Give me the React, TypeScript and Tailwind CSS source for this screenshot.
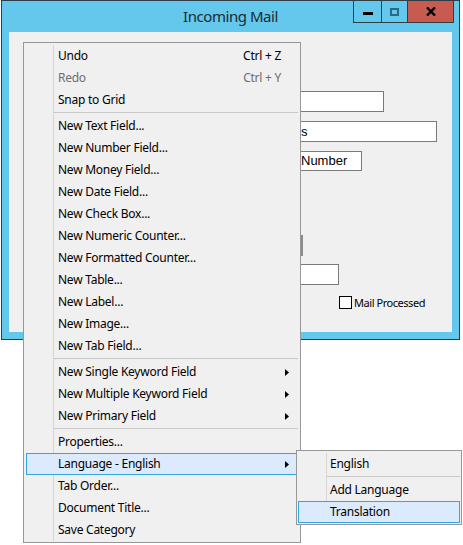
import clsx from "clsx";

type Entry =
  | { sep: true }
  | { sep?: false; label: string; shortcut?: string; disabled?: boolean; arrow?: boolean; active?: boolean };

const mainItems: Entry[] = [
  { label: "Undo", shortcut: "Ctrl + Z" },
  { label: "Redo", shortcut: "Ctrl + Y", disabled: true },
  { label: "Snap to Grid" },
  { sep: true },
  { label: "New Text Field..." },
  { label: "New Number Field..." },
  { label: "New Money Field..." },
  { label: "New Date Field..." },
  { label: "New Check Box..." },
  { label: "New Numeric Counter..." },
  { label: "New Formatted Counter..." },
  { label: "New Table..." },
  { label: "New Label..." },
  { label: "New Image..." },
  { label: "New Tab Field..." },
  { sep: true },
  { label: "New Single Keyword Field", arrow: true },
  { label: "New Multiple Keyword Field", arrow: true },
  { label: "New Primary Field", arrow: true },
  { sep: true },
  { label: "Properties..." },
  { label: "Language - English", arrow: true, active: true },
  { label: "Tab Order..." },
  { label: "Document Title..." },
  { label: "Save Category" },
];

const subItems: Entry[] = [
  { label: "English" },
  { sep: true },
  { label: "Add Language" },
  { label: "Translation", active: true },
];

function Arrow() {
  return (
    <svg width="4" height="7" viewBox="0 0 4 7" className="shrink-0">
      <path d="M0 0 L4 3.5 L0 7 Z" fill="#000" />
    </svg>
  );
}

function MenuList({ items, gutter }: { items: Entry[]; gutter: "main" | "sub" }) {
  const gutterW = gutter === "main" ? "w-[28px]" : "w-[29px]";
  const gutterActiveW = gutter === "main" ? "w-[27px]" : "w-[28px]";
  const textPad = gutter === "main" ? "pl-[4px]" : "pl-[3px]";
  return (
    <>
      {items.map((it, i) =>
        it.sep ? (
          <div key={i} className="flex h-[4px]">
            <div className={clsx("h-full shrink-0 border-r border-[#d5d5d5]", gutterW)} />
            <div className="mt-[1px] h-px flex-1 bg-[#c8c8c8]" />
          </div>
        ) : (
          <div
            key={i}
            className={clsx(
              "flex h-[22px] items-center",
              it.active && "border border-[#33a6e0] bg-[#dbeafc]"
            )}
          >
            <div
              className={clsx(
                "h-full shrink-0",
                it.active ? gutterActiveW : clsx(gutterW, "border-r border-[#d5d5d5]")
              )}
            />
            <span className={clsx(textPad, "whitespace-nowrap", it.disabled ? "text-[#6d6d6d]" : "text-black")}>
              {it.label}
            </span>
            {it.shortcut && (
              <span className={clsx("ml-auto mr-[17px] whitespace-nowrap", it.disabled ? "text-[#6d6d6d]" : "text-black")}>
                {it.shortcut}
              </span>
            )}
            {it.arrow && (
              <div className={clsx("ml-auto", it.active ? "mr-[8px]" : "mr-[9px]")}>
                <Arrow />
              </div>
            )}
          </div>
        )
      )}
    </>
  );
}

export default function App() {
  return (
    <div className="relative h-[545px] w-[463px] overflow-hidden bg-white font-['Noto_Sans','Open_Sans',sans-serif]">
      {/* window */}
      <div className="ml-[1px] flex h-[340px] w-[459px] flex-col border border-[#2f3d46] bg-[#63c8eb]">
        <div className="relative flex h-[31px] shrink-0 items-center justify-center">
          <span className="text-[15px] tracking-[-0.45px] text-[#1b2a33]">Incoming Mail</span>
          <div className="absolute right-[5px] top-[-1px] flex h-[23px]">
            <div className="flex w-[29px] items-center justify-center border border-[#2f3d46]">
              <div className="mt-[3px] h-[3px] w-[10px] bg-black" />
            </div>
            <div className="-ml-px flex w-[27px] items-center justify-center border border-[#2f3d46]">
              <div className="h-[8px] w-[9px] border-2 border-[#2b6a86]" />
            </div>
            <div className="-ml-px flex w-[47px] items-center justify-center border border-[#2f3d46] bg-[#c75b50]">
              <svg width="10" height="9" viewBox="0 0 10 9">
                <path d="M1 0.5 L9 8.5 M9 0.5 L1 8.5" stroke="#000" strokeWidth="2.4" />
              </svg>
            </div>
          </div>
        </div>
        <div className="relative mx-[7px] h-[300px] bg-[#f0f0f0] font-['Liberation_Sans',Arial,sans-serif] text-[13px] text-black">
          <div className="absolute left-[281px] top-[59px] h-[21px] w-[94px] border border-[#7a7a7a] bg-white" />
          <div className="absolute left-[281px] top-[89px] flex h-[21px] w-[147px] items-center border border-[#7a7a7a] bg-white pl-[10px]">
            s
          </div>
          <div className="absolute left-[281px] top-[119px] flex h-[20px] w-[72px] items-center border border-[#7a7a7a] bg-white pl-[10px]">
            Number
          </div>
          <div className="absolute left-[280px] top-[203px] h-[21px] w-[14px] border-r-2 border-[#8c8c8c]" />
          <div className="absolute left-[281px] top-[232px] h-[21px] w-[49px] border border-[#7a7a7a] bg-white" />
          <div className="absolute left-[330px] top-[264px] flex items-center gap-[2px]">
            <div className="h-[13px] w-[13px] border border-black bg-white" />
            <span className="font-['Noto_Sans',sans-serif] text-[11px] leading-[13px] tracking-[-0.45px]">Mail Processed</span>
          </div>
        </div>
      </div>

      {/* context menu */}
      <div className="absolute left-[23px] top-[42px] w-[278px] border border-[#979797] bg-[#f0f0f0] px-[2px] pb-[1px] pt-[2px] text-[12px] tracking-[-0.25px]">
        <MenuList items={mainItems} gutter="main" />
      </div>

      {/* submenu */}
      <div className="absolute left-[296px] top-[450px] w-[166px] border border-[#979797] bg-[#f0f0f0] px-[1px] pb-[1px] pt-[2px] text-[12px] tracking-[-0.25px]">
        <MenuList items={subItems} gutter="sub" />
      </div>
    </div>
  );
}
